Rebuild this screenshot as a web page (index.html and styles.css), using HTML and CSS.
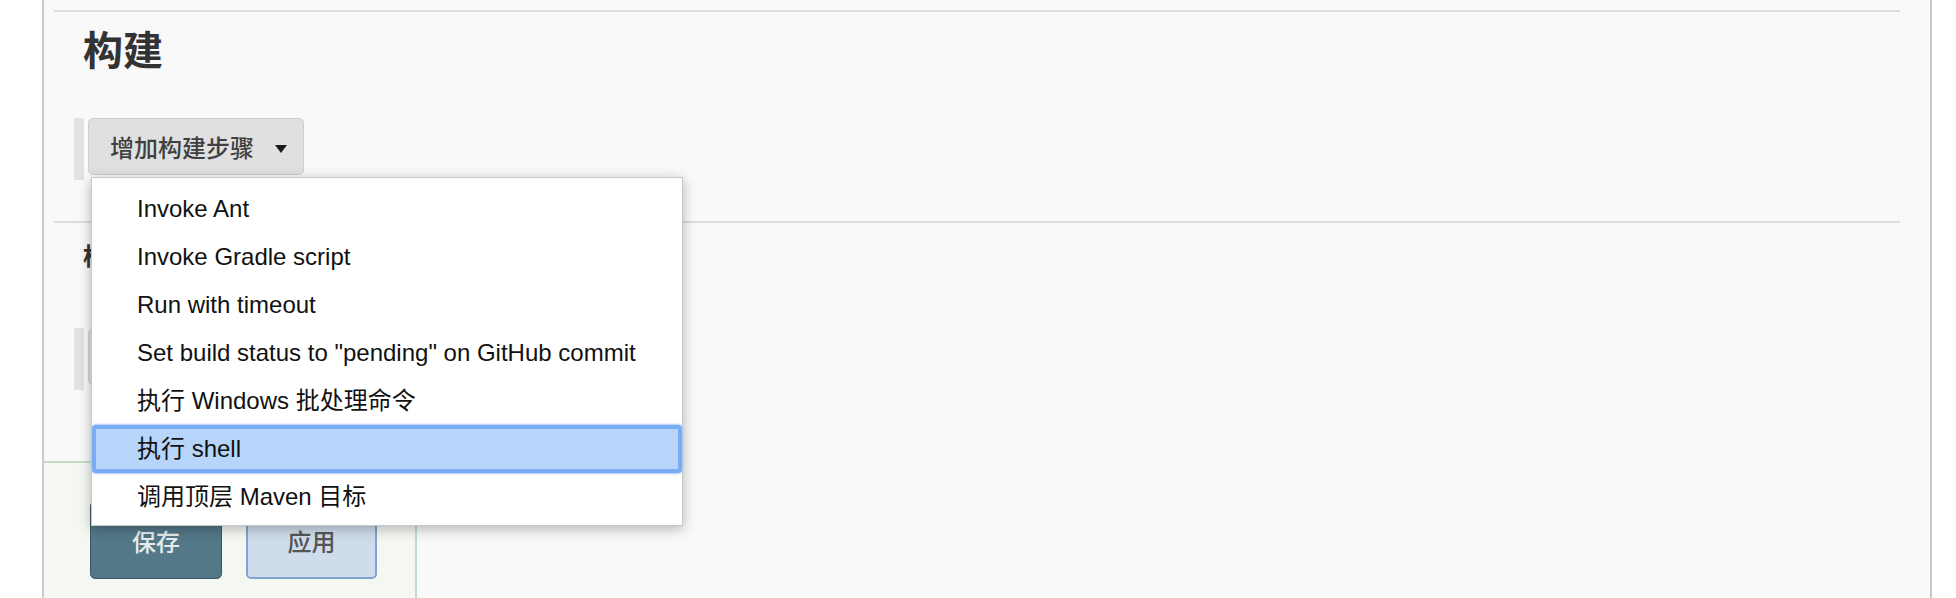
FILE: index.html
```html
<!DOCTYPE html>
<html lang="zh-CN">
<head>
  <meta charset="UTF-8" />
  <meta name="viewport" content="width=device-width,initial-scale=1.0" />
  <title>构建配置</title>
  <link rel="stylesheet" href="styles.css">
</head>
<body>
  <main class="panel">
    <div class="content">
      <section class="section">
        <hr class="divider">
        <h2 class="section-title">构建</h2>
        <div class="step-row">
          <span class="handle" aria-hidden="true"></span>
          <div class="dropdown">
            <button class="step-btn" aria-haspopup="true" aria-expanded="true">增加构建步骤<span class="caret"></span></button>
            <ul class="menu" role="menu">
              <li role="menuitem">Invoke Ant</li>
              <li role="menuitem">Invoke Gradle script</li>
              <li role="menuitem">Run with timeout</li>
              <li role="menuitem">Set build status to "pending" on GitHub commit</li>
              <li role="menuitem">执行 Windows 批处理命令</li>
              <li role="menuitem" class="active">执行 shell</li>
              <li role="menuitem">调用顶层 Maven 目标</li>
            </ul>
          </div>
        </div>
      </section>
      <section class="section">
        <hr class="divider">
        <h2 class="section-title small">构建后操作</h2>
        <div class="step-row second">
          <span class="handle" aria-hidden="true"></span>
          <div class="dropdown">
            <button class="step-btn">增加构建后操作步骤<span class="caret"></span></button>
          </div>
        </div>
      </section>
    </div>
    <div class="bottom-bar">
      <button class="btn btn-save">保存</button>
      <button class="btn btn-apply">应用</button>
    </div>
  </main>
</body>
</html>
```

FILE: styles.css
```css
html, body { margin: 0; background: #ffffff; }
body {
  height: 598px;
  overflow: hidden;
  font-family: "Liberation Sans", "Noto Sans CJK SC", sans-serif;
  color: #111;
}
.panel {
  box-sizing: border-box;
  width: 1890px;
  height: 598px;
  margin-left: 42px;
  background: #f9f9f9;
  border-left: 2px solid #cbcbcb;
  border-right: 2px solid #c8c8c8;
}
.content { padding: 10px 30px 0 10px; }
.divider { height: 2px; margin: 0; border: 0; background: #dddddd; }

.section-title {
  margin: 19px 0 0 29px;
  font-size: 40px;
  line-height: 40px;
  font-weight: 700;
  color: #333;
}
.section-title.small { margin-top: 22px; font-size: 24px; line-height: 24px; }

.step-row { display: flex; align-items: flex-start; gap: 4px; margin: 47px 0 41px 20px; }
.step-row.second { margin: 59px 0 0 20px; }
.handle { width: 10px; height: 62px; background: #e2e2e2; }

.dropdown { position: relative; }
.step-btn {
  display: flex;
  align-items: center;
  gap: 21px;
  box-sizing: border-box;
  height: 57px;
  padding: 0 16px 0 21px;
  background: #e0e0e0;
  border: 1px solid #cfcfcf;
  border-radius: 5px;
  font-family: "Noto Sans CJK SC", sans-serif;
  font-size: 24px;
  font-weight: 500;
  color: #404040;
}
.caret {
  width: 0; height: 0;
  border-left: 6.5px solid transparent;
  border-right: 6.5px solid transparent;
  border-top: 8px solid #1a1a1a;
  margin-top: 4px;
}

.menu {
  position: absolute;
  top: 59px;
  left: 3px;
  z-index: 10;
  box-sizing: border-box;
  width: 592px;
  margin: 0;
  padding: 7px 0 4px;
  list-style: none;
  background: #ffffff;
  border: 1px solid #c8c8c8;
  box-shadow: 0 3px 12px rgba(0, 0, 0, 0.28);
}
.menu li {
  height: 48px;
  padding-left: 45px;
  font-size: 24px;
  line-height: 48px;
  white-space: nowrap;
}
.menu li.active {
  background: #b7d4fa;
  border-radius: 4px;
  box-shadow: inset 0 0 0 4px #7aabf5, 0 0 2px 1px #a9c9f6;
}

.bottom-bar {
  box-sizing: border-box;
  width: 373px;
  height: 140px;
  margin-top: 71px;
  padding: 38px 0 0 46px;
  display: flex;
  gap: 24px;
  background: #f5f8f2;
  border-top: 2px solid #c3dcc7;
  border-right: 2px solid #c3dcc7;
}
.btn {
  box-sizing: border-box;
  width: 132px;
  height: 78px;
  border-radius: 5px;
  font-family: "Noto Sans CJK SC", sans-serif;
  font-size: 24px;
  font-weight: 500;
}
.btn-save {
  background: #537887;
  border: 1px solid #3c5865;
  color: #e6ebee;
}
.btn-apply {
  width: 131px;
  background: #cfdcec;
  border: 2px solid #7fa4d1;
  color: #555;
}
```
